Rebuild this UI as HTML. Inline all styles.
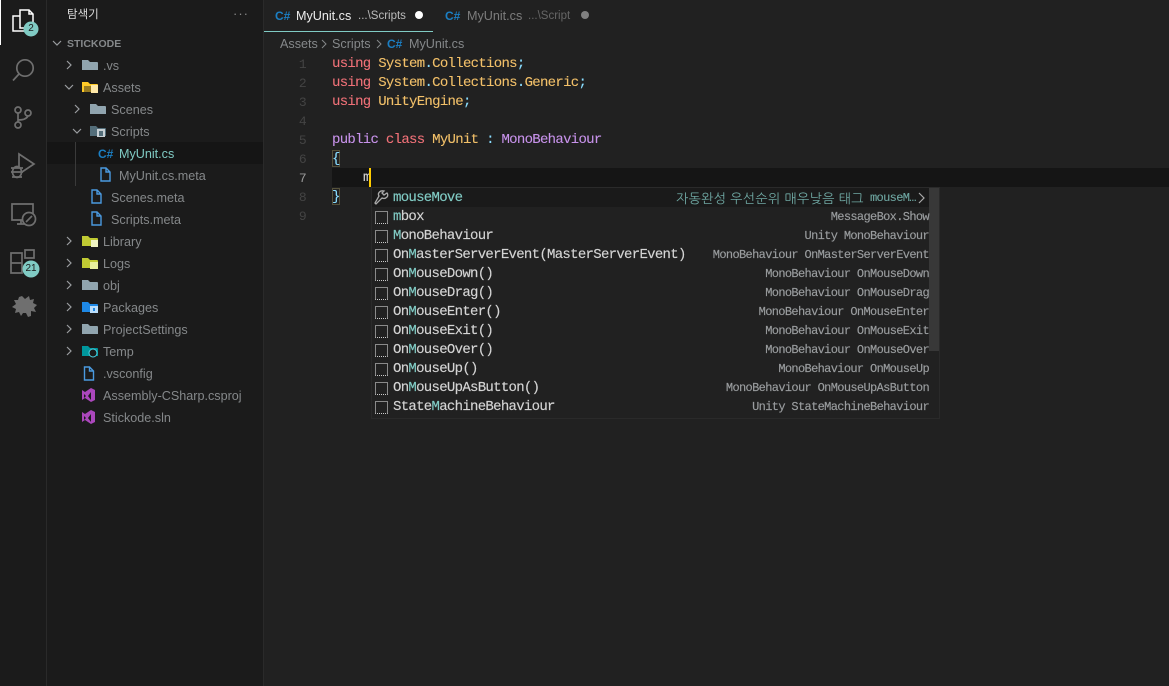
<!DOCTYPE html>
<html lang="ko"><head><meta charset="utf-8"><title>MyUnit.cs</title>
<style>
html,body{margin:0;padding:0;width:1169px;height:686px;overflow:hidden;background:#212121}
body{position:relative;font-family:"Liberation Sans","Noto Sans CJK KR",sans-serif;font-size:13px}
div,span.a,svg.a{position:absolute}
.t{white-space:nowrap;height:22px;line-height:22px;color:#85888a;font-size:12.6px}
.r{margin-top:1px}
.c{white-space:nowrap;font-family:"Liberation Mono","NanumGothic",monospace;font-size:14px;letter-spacing:-.7px;height:19px;line-height:19px;margin-top:1px;color:#d4d4d4;-webkit-text-stroke:.1px currentColor}
.n{position:absolute;left:284px;width:22px;text-align:right;color:#444;font-size:13px;-webkit-text-stroke:0}
.k{color:#f07178}.y{color:#f2c069}.p{color:#89ddff}.v{color:#c792ea}
.s{white-space:nowrap;font-family:"Liberation Mono",monospace;font-size:14px;letter-spacing:-.7px;height:19px;line-height:19px;margin-top:1px;left:393px;color:#d4d4d4;-webkit-text-stroke:.15px currentColor}
.s b{font-weight:normal;color:#80cbc4}
.d{white-space:nowrap;font-family:"Liberation Mono",monospace;font-size:12px;letter-spacing:-.65px;height:19px;line-height:19px;margin-top:1px;right:240px;color:#9a9d9f;text-align:right;-webkit-text-stroke:.15px currentColor}
.b{left:375px;width:11px;height:11px;border:1px solid #8a8a8a;border-bottom:1px dotted #ccc}
</style></head><body>
<div style="left:0;top:0;width:46px;height:686px;background:#1b1b1b"></div>
<div style="left:46px;top:0;width:1px;height:686px;background:#2a2a2a"></div>
<div style="left:47px;top:0;width:216px;height:686px;background:#1b1b1b"></div>
<div style="left:263px;top:0;width:1px;height:686px;background:#2a2a2a"></div>
<div style="left:0;top:0;width:1px;height:45px;background:#fff"></div>

<svg class="a" style="left:0;top:0" width="46" height="330" fill="none" stroke="#6f6f6f" stroke-width="1.7">
<path d="M20 10h9l4 4v14H20z M20 16h-7v15h15v-3 M29 10v4h4" stroke="#fff" stroke-width="1.5"/>
<circle cx="25" cy="68" r="8.200"/><path d="M19 74 13 80.500"/>
<circle cx="18" cy="110" r="3"/><circle cx="18" cy="125" r="3"/><circle cx="28" cy="113" r="3"/><path d="M18 113v9M18 120c6 0 9-2 10-4"/>
<path d="M19 154v20l15-10z"/><ellipse cx="17" cy="172" rx="4.500" ry="5.500" fill="#1b1b1b"/><path d="M11 168h12M11 172h12M12 177h10"/>
<path d="M33 218v-14H12v16h17M17 224h9M21 220v4"/><circle cx="29" cy="219" r="6.500" fill="#1b1b1b"/><path d="M26 222l6-6"/>
<path d="M11 253h11v10H11zM11 263h11v10H11zM22 263v10M25 250h9v8h-9z"/>
<path d="M22 296l3 3 4-3 1 4 4-1-1 4 4 2-3 3 2 4-5-1 0 5-3 1-2-4-3 0-2 3-2-4-4 1 1-4-4-2 4-3-2-4 4 0 1-3z" fill="#6f6f6f" stroke="none"/>
<circle cx="31" cy="29" r="7.500" fill="#80cbc4" stroke="none"/><circle cx="31" cy="269" r="8.500" fill="#80cbc4" stroke="none"/>
</svg>
<div style="left:24px;top:22px;width:14px;text-align:center;font-size:10px;line-height:14px;color:#1b1b1b">2</div>
<div style="left:22px;top:262px;width:18px;text-align:center;font-size:10px;line-height:14px;color:#1b1b1b">21</div>

<div class="t r" style="left:67px;top:3px;color:#d8d8d8;font-size:11.500px">탐색기</div>
<div class="t" style="left:233px;top:3px;color:#888;font-size:13px;letter-spacing:1px">···</div>
<div class="t r" style="left:67px;top:32px;font-size:10.500px;font-weight:bold;color:#85888a">STICKODE</div>
<div style="left:47px;top:142px;width:216px;height:22px;background:#151515"></div>
<div style="left:75px;top:142px;width:1px;height:44px;background:#3a3a3a"></div>

<svg class="a" style="left:47px;top:0" width="216" height="430" fill="none" stroke="#9a9da0" stroke-width="1.200">
<path d="M6 41l4 4 4-4M20 61l4 4-4 4M18 85l4 4 4-4M28 105l4 4-4 4M26 129l4 4 4-4M20 237l4 4-4 4M20 259l4 4-4 4M20 281l4 4-4 4M20 303l4 4-4 4M20 325l4 4-4 4M20 347l4 4-4 4"/>
<g stroke="none">
<path d="M35 60h6l2 2h7q1 0 1 1v7H35z" fill="#90a4ae"/>
<path d="M35 82h6l2 2h7q1 0 1 1v7H35z" fill="#ffca28"/><path d="M37 86h14v6H37z" fill="#1b1b1b" opacity=".45"/><path d="M44 85h7v8h-7z" fill="#ffe9a8"/>
<path d="M43 104h6l2 2h7q1 0 1 1v7H43z" fill="#90a4ae"/>
<path d="M43 126h6l2 2h7q1 0 1 1v7H43z" fill="#546e7a"/><path d="M50 129h8v8h-8z" fill="#c8d0d4"/><path d="M52 131h4v5h-4z" fill="#546e7a"/>
<path d="M35 236h6l2 2h7q1 0 1 1v7H35z" fill="#c0ca33"/><path d="M44 240h7v7h-7z" fill="#f0f4c3"/>
<path d="M35 258h6l2 2h7q1 0 1 1v7H35z" fill="#c0ca33"/><path d="M43 262h8v7h-8z" fill="#e6ee9c"/>
<path d="M35 280h6l2 2h7q1 0 1 1v7H35z" fill="#90a4ae"/>
<path d="M35 302h6l2 2h7q1 0 1 1v7H35z" fill="#1e88e5"/><path d="M43 306h8v7h-8z" fill="#bbdefb"/><path d="M46 308h2v3h-2z" fill="#1e88e5"/>
<path d="M35 324h6l2 2h7q1 0 1 1v7H35z" fill="#90a4ae"/>
<path d="M35 346h6l2 2h7q1 0 1 1v7H35z" fill="#00979d"/><circle cx="46" cy="353" r="4" fill="#1b1b1b" stroke="#4dd0e1" stroke-width="1"/>
</g>
<g stroke="#4a9ae0" stroke-width="1.400">
<path d="M54 168h5l4 4v9H54zM59 168v4h4"/>
<path d="M45 190h5l4 4v9H45zM50 190v4h4"/>
<path d="M45 212h5l4 4v9H45zM50 212v4h4"/>
<path d="M37.500 367h5l4 4v9h-9zM42.500 367v4h4"/>
</g>
<path d="M35 392v8l3-2 6 4 4-2v-10l-4-2-6 4-3-2zM37 394l2 2-2 2zM44 392v8l-3-4z" fill="#ab47bc" stroke="none" fill-rule="evenodd"/>
<path d="M35 414v8l3-2 6 4 4-2v-10l-4-2-6 4-3-2zM37 416l2 2-2 2zM44 414v8l-3-4z" fill="#ab47bc" stroke="none" fill-rule="evenodd"/>
</svg>

<div class="t r" style="left:103px;top:54px">.vs</div>
<div class="t r" style="left:103px;top:76px">Assets</div>
<div class="t r" style="left:111px;top:98px">Scenes</div>
<div class="t r" style="left:111px;top:120px">Scripts</div>
<div class="t r" style="left:98px;top:142px;color:#1b7fc4;font-weight:bold;font-size:12px">C#</div>
<div class="t r" style="left:119px;top:142px;color:#80cbc4">MyUnit.cs</div>
<div class="t r" style="left:119px;top:164px">MyUnit.cs.meta</div>
<div class="t r" style="left:111px;top:186px">Scenes.meta</div>
<div class="t r" style="left:111px;top:208px">Scripts.meta</div>
<div class="t r" style="left:103px;top:230px">Library</div>
<div class="t r" style="left:103px;top:252px">Logs</div>
<div class="t r" style="left:103px;top:274px">obj</div>
<div class="t r" style="left:103px;top:296px">Packages</div>
<div class="t r" style="left:103px;top:318px">ProjectSettings</div>
<div class="t r" style="left:103px;top:340px">Temp</div>
<div class="t r" style="left:103px;top:362px">.vsconfig</div>
<div class="t r" style="left:103px;top:384px">Assembly-CSharp.csproj</div>
<div class="t r" style="left:103px;top:406px">Stickode.sln</div>

<div style="left:264px;top:31px;width:169px;height:1px;background:#80cbc4"></div>
<div class="t" style="left:275px;top:5px;color:#1b7fc4;font-weight:bold;font-size:12px">C#</div>
<div class="t" style="left:296px;top:5px;color:#eee">MyUnit.cs</div>
<div class="t" style="left:358px;top:5px;color:#bbb;font-size:11.500px">...\Scripts</div>
<div style="left:415px;top:11px;width:8px;height:8px;border-radius:50%;background:#fff"></div>
<div class="t" style="left:445px;top:5px;color:#1b7fc4;font-weight:bold;font-size:12px">C#</div>
<div class="t" style="left:467px;top:5px;color:#7d7d7d">MyUnit.cs</div>
<div class="t" style="left:528px;top:5px;color:#666;font-size:11.500px">...\Script</div>
<div style="left:581px;top:11px;width:8px;height:8px;border-radius:50%;background:#808080"></div>

<div class="t" style="left:280px;top:33px">Assets</div>
<div class="t" style="left:332px;top:33px">Scripts</div>
<svg class="a" style="left:264px;top:36px" width="120" height="16" fill="none" stroke="#85888a"><path d="M58 4l4 4-4 4M113 4l4 4-4 4"/></svg>
<div class="t" style="left:387px;top:33px;color:#1b7fc4;font-weight:bold;font-size:12px">C#</div>
<div class="t" style="left:409px;top:33px">MyUnit.cs</div>

<div style="left:332px;top:168px;width:837px;height:19px;background:#151515"></div>
<div style="left:332px;top:150px;width:8px;height:17px;border:1px solid #55513a;box-sizing:border-box"></div>
<div style="left:332px;top:188px;width:8px;height:17px;border:1px solid #55513a;box-sizing:border-box"></div>

<div class="c" style="left:0;top:54px;width:300px"><span class="n">1</span></div>
<div class="c" style="left:0;top:73px;width:300px"><span class="n">2</span></div>
<div class="c" style="left:0;top:92px;width:300px"><span class="n">3</span></div>
<div class="c" style="left:0;top:111px;width:300px"><span class="n">4</span></div>
<div class="c" style="left:0;top:130px;width:300px"><span class="n">5</span></div>
<div class="c" style="left:0;top:149px;width:300px"><span class="n">6</span></div>
<div class="c" style="left:0;top:168px;width:300px"><span class="n" style="color:#999">7</span></div>
<div class="c" style="left:0;top:187px;width:300px"><span class="n">8</span></div>
<div class="c" style="left:0;top:206px;width:300px"><span class="n">9</span></div>

<div class="c" style="left:332px;top:54px"><span class="k">using</span> <span class="y">System</span><span class="p">.</span><span class="y">Collections</span><span class="p">;</span></div>
<div class="c" style="left:332px;top:73px"><span class="k">using</span> <span class="y">System</span><span class="p">.</span><span class="y">Collections</span><span class="p">.</span><span class="y">Generic</span><span class="p">;</span></div>
<div class="c" style="left:332px;top:92px"><span class="k">using</span> <span class="y">UnityEngine</span><span class="p">;</span></div>
<div class="c" style="left:332px;top:130px"><span class="v">public</span> <span class="k">class</span> <span class="y">MyUnit</span> <span class="p">:</span> <span class="v">MonoBehaviour</span></div>
<div class="c p" style="left:332px;top:149px">{</div>
<div class="c" style="left:363px;top:168px;color:#d4d4d4">m</div>
<div style="left:369px;top:168px;width:2px;height:19px;background:#ffcc00"></div>
<div class="c p" style="left:332px;top:187px">}</div>

<div style="left:371px;top:187px;width:567px;height:230px;background:#212121;border:1px solid #2a2a2a"></div>
<div style="left:372px;top:188px;width:566px;height:19px;background:#1a1a1a"></div>
<div style="left:929px;top:188px;width:10px;height:163px;background:#383838"></div>
<svg class="a" style="left:373px;top:190px" width="16" height="16" fill="none" stroke="#aaa" stroke-width="1.300"><path d="M2 13l1 1 6-6c2 1 4 0 5-1s1-3 0-4l-3 2-2-2 2-2c-2-.5-3.500 0-4.500 1S5 4.500 6 6z"/></svg>
<div class="s" style="top:188px;color:#80cbc4">mouseMove</div>
<div class="c" style="left:676px;top:188px;color:#6fa8a3;font-size:13px;letter-spacing:.35px;font-family:'Liberation Sans','NanumGothic',sans-serif;-webkit-text-stroke:0">자동완성 우선순위 매우낮음 태그</div>
<div class="c" style="left:870px;top:188px;color:#6fa8a3;font-size:12px;letter-spacing:-.65px">mouseM…</div>
<svg class="a" style="left:917px;top:192px" width="10" height="12" fill="none" stroke="#aaa" stroke-width="1.200"><path d="M2 1l5 5-5 5"/></svg>

<div class="b" style="top:211px"></div><div class="s" style="top:207px"><b>m</b>box</div><div class="d" style="top:207px">MessageBox.Show</div>
<div class="b" style="top:230px"></div><div class="s" style="top:226px"><b>M</b>onoBehaviour</div><div class="d" style="top:226px">Unity MonoBehaviour</div>
<div class="b" style="top:249px"></div><div class="s" style="top:245px">On<b>M</b>asterServerEvent(MasterServerEvent)</div><div class="d" style="top:245px">MonoBehaviour OnMasterServerEvent</div>
<div class="b" style="top:268px"></div><div class="s" style="top:264px">On<b>M</b>ouseDown()</div><div class="d" style="top:264px">MonoBehaviour OnMouseDown</div>
<div class="b" style="top:287px"></div><div class="s" style="top:283px">On<b>M</b>ouseDrag()</div><div class="d" style="top:283px">MonoBehaviour OnMouseDrag</div>
<div class="b" style="top:306px"></div><div class="s" style="top:302px">On<b>M</b>ouseEnter()</div><div class="d" style="top:302px">MonoBehaviour OnMouseEnter</div>
<div class="b" style="top:325px"></div><div class="s" style="top:321px">On<b>M</b>ouseExit()</div><div class="d" style="top:321px">MonoBehaviour OnMouseExit</div>
<div class="b" style="top:344px"></div><div class="s" style="top:340px">On<b>M</b>ouseOver()</div><div class="d" style="top:340px">MonoBehaviour OnMouseOver</div>
<div class="b" style="top:363px"></div><div class="s" style="top:359px">On<b>M</b>ouseUp()</div><div class="d" style="top:359px">MonoBehaviour OnMouseUp</div>
<div class="b" style="top:382px"></div><div class="s" style="top:378px">On<b>M</b>ouseUpAsButton()</div><div class="d" style="top:378px">MonoBehaviour OnMouseUpAsButton</div>
<div class="b" style="top:401px"></div><div class="s" style="top:397px">State<b>M</b>achineBehaviour</div><div class="d" style="top:397px">Unity StateMachineBehaviour</div>
</body></html>
